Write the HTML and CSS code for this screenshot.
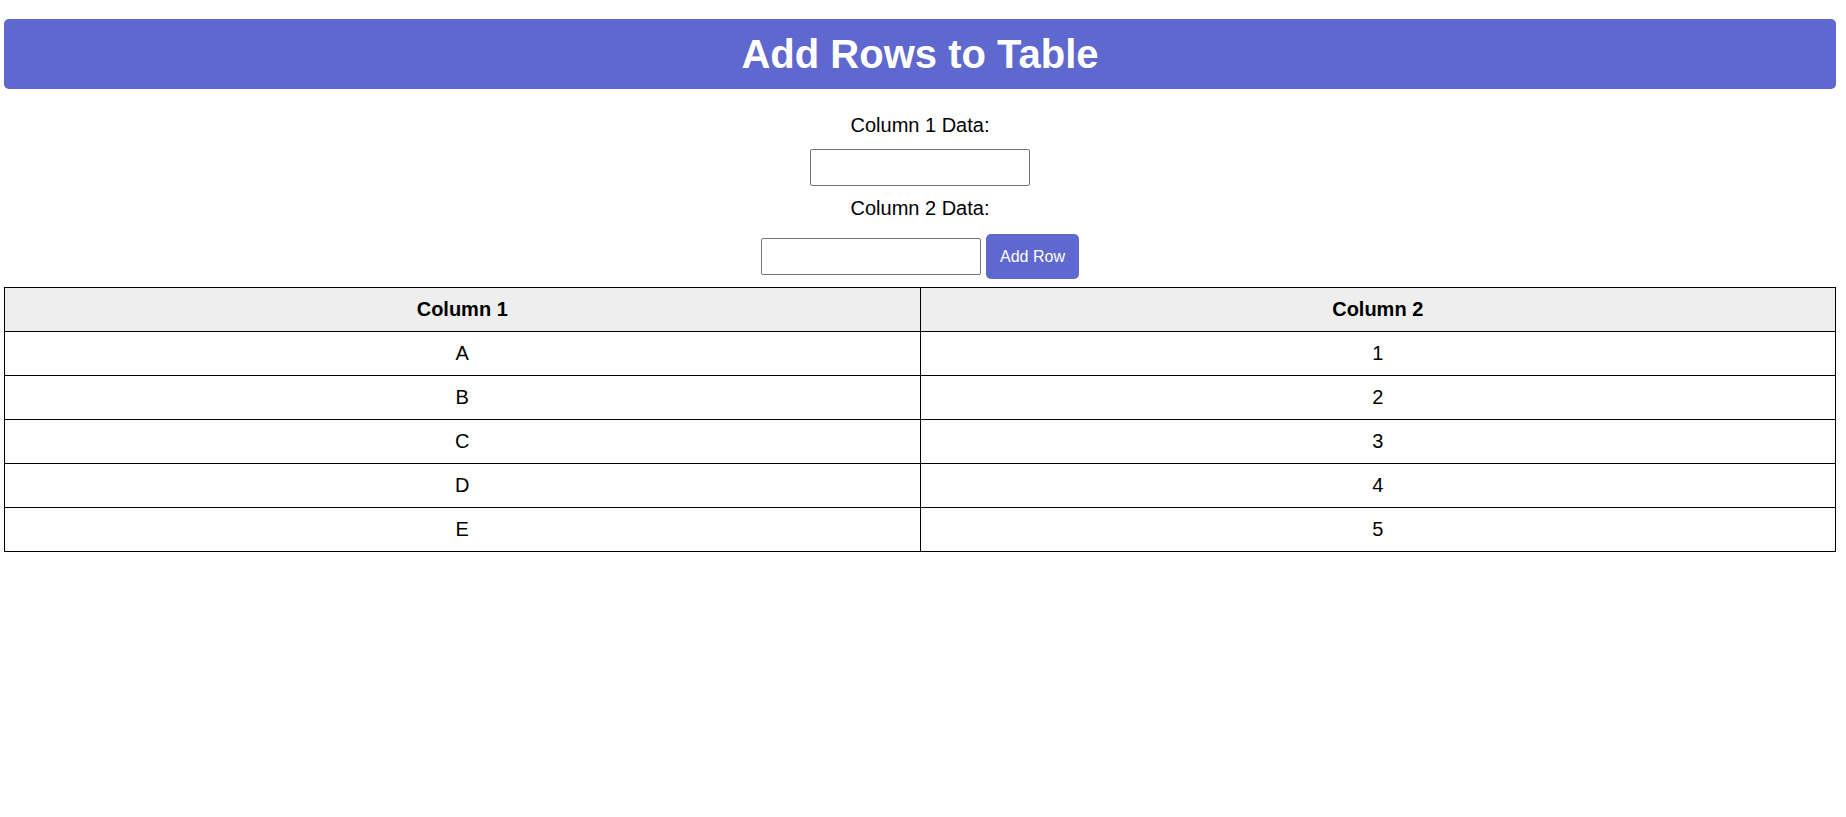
FILE: index.html
```html
<!DOCTYPE html>
<html lang="en">
<head>
<meta charset="utf-8">
<title>Add Rows to Table</title>
<link rel="stylesheet" href="styles.css">
</head>
<body>
<div class="page">
  <h1 class="title">Add Rows to Table</h1>
  <div class="form">
    <label class="label" for="col1">Column 1 Data:</label>
    <input class="field field-single" type="text" id="col1">
    <label class="label label-second" for="col2">Column 2 Data:</label>
    <div class="row">
      <input class="field" type="text" id="col2">
      <button class="btn" type="button">Add Row</button>
    </div>
  </div>
  <table class="data">
    <thead>
      <tr><th>Column 1</th><th>Column 2</th></tr>
    </thead>
    <tbody>
      <tr><td>A</td><td>1</td></tr>
      <tr><td>B</td><td>2</td></tr>
      <tr><td>C</td><td>3</td></tr>
      <tr><td>D</td><td>4</td></tr>
      <tr><td>E</td><td>5</td></tr>
    </tbody>
  </table>
</div>
</body>
</html>
```
FILE: styles.css
```css
html, body {
  margin: 0;
  padding: 0;
  background: #ffffff;
}

body {
  font-family: "Liberation Sans", Arial, sans-serif;
  color: #000000;
}

.page {
  padding: 19px 10px 0 4px;
}

.title {
  margin: 0;
  padding: 12px 0;
  background: #5e68cf;
  color: #ffffff;
  font-size: 40px;
  line-height: 46px;
  font-weight: 700;
  text-align: center;
  border-radius: 5px;
}

.form {
  display: flex;
  flex-direction: column;
  align-items: center;
}

.label {
  display: block;
  margin-top: 25px;
  font-size: 20px;
  line-height: 23px;
}

.label-second {
  margin-top: 11px;
}

.field {
  box-sizing: border-box;
  width: 220px;
  height: 37px;
  margin: 0;
  padding: 2px 6px;
  border: 1px solid #767676;
  border-radius: 2px;
  font-family: "Liberation Sans", Arial, sans-serif;
  font-size: 16px;
  background: #ffffff;
}

.field-single {
  margin-top: 12px;
}

.row {
  display: flex;
  align-items: center;
  justify-content: center;
  gap: 5px;
  margin-top: 14px;
}

.btn {
  box-sizing: border-box;
  height: 45px;
  padding: 0 14px;
  border: none;
  border-radius: 5px;
  background: #5e68cf;
  color: #ffffff;
  font-family: "Liberation Sans", Arial, sans-serif;
  font-size: 16px;
  cursor: pointer;
}

.data {
  width: 100%;
  margin-top: 8px;
  border-collapse: collapse;
  table-layout: fixed;
}

.data th,
.data td {
  border: 1px solid #000000;
  padding: 10px;
  font-size: 20px;
  line-height: 23px;
  text-align: center;
}

.data th {
  background: #eeeeee;
  font-weight: 700;
}
```
